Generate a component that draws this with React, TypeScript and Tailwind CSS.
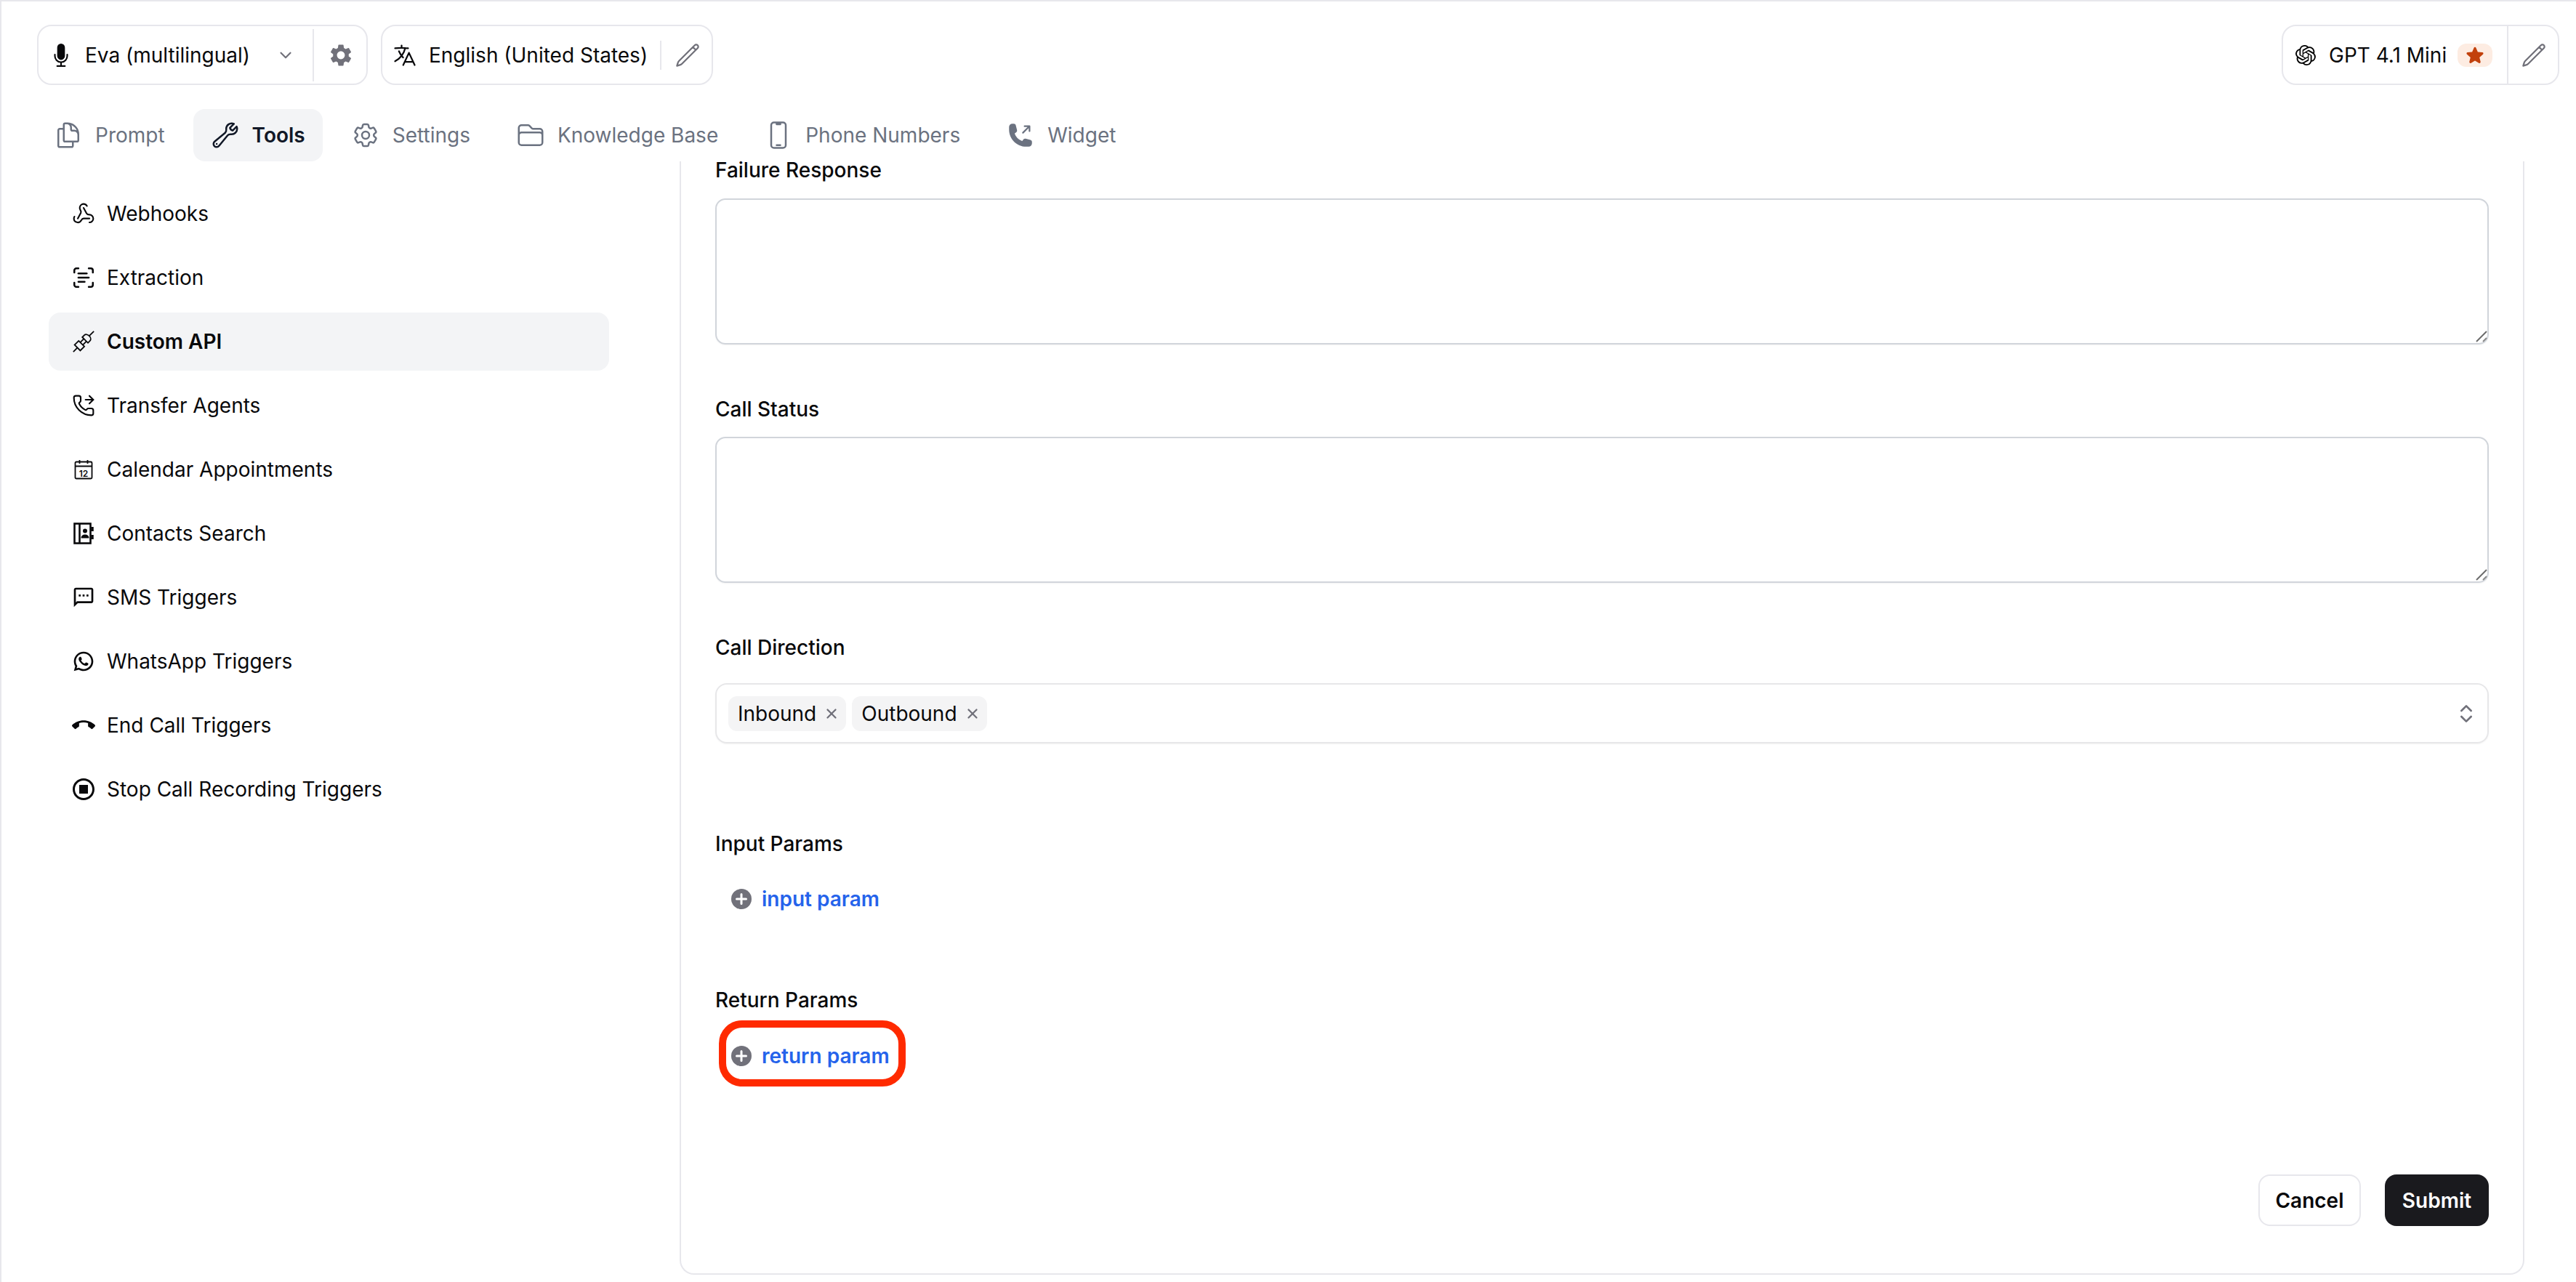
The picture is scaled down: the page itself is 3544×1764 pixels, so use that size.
import { ChevronDown, ChevronsUpDown, PhoneForwarded, ScanText, Webhook, X } from "lucide-react";
import type { ReactNode } from "react";
import {
  HiMicrophone,
  HiOutlineCog6Tooth,
  HiOutlineDevicePhoneMobile,
  HiOutlineDocumentDuplicate,
  HiOutlineFolder,
  HiOutlineLanguage,
  HiOutlinePencil,
  HiOutlineWrench,
  HiPhoneArrowUpRight,
  HiStar,
} from "react-icons/hi2";
import { MdCallEnd, MdOutlineSms, MdOutlineStopCircle, MdSettings } from "react-icons/md";
import { RiWhatsappLine } from "react-icons/ri";
import { SiOpenai } from "react-icons/si";

function CalendarIcon() {
  return (
    <svg viewBox="0 0 28 28" className="h-[28px] w-[28px]" fill="none" stroke="currentColor" strokeWidth="1.8">
      <rect x="2.5" y="3.5" width="23" height="23" rx="1.5" />
      <path d="M2.5 9.5h23M8.5 1v5M19.5 1v5" />
      <text x="14" y="23.5" textAnchor="middle" fontSize="12" fontWeight="600" fill="currentColor" stroke="none" fontFamily="Inter, sans-serif">
        12
      </text>
    </svg>
  );
}

function ContactsIcon() {
  return (
    <svg viewBox="0 0 30 32" className="h-[32px] w-[30px]" fill="none" stroke="currentColor" strokeWidth="2.6">
      <rect x="2.5" y="2.5" width="22" height="27" />
      <path d="M9.5 2.5v27" />
      <circle cx="17" cy="12.5" r="3" fill="currentColor" stroke="none" />
      <path d="M11.5 22.5c0-3.5 2.5-5 5.5-5s5.500 1.500 5.500 5z" fill="currentColor" stroke="none" />
      <path d="M27 7v6M27 18v6" strokeWidth="3.500" />
    </svg>
  );
}

function PlugIcon() {
  return (
    <svg viewBox="0 0 30 30" className="h-[30px] w-[30px]" fill="none" stroke="currentColor" strokeWidth="1.8">
      <g transform="translate(15 15) rotate(-45)">
        <path d="M-20 0h8M11 0h9" />
        <rect x="-12" y="-5.500" width="8" height="11" />
        <path d="M-4-2.500h7M-4 2.500h7" />
        <path d="M3-5.500h4a4 5.500 0 0 1 4 5.500 4 5.500 0 0 1-4 5.500h-4z" />
      </g>
    </svg>
  );
}

function PlusIcon() {
  return (
    <svg viewBox="0 0 28 28" className="h-[28px] w-[28px] shrink-0">
      <circle cx="14" cy="14" r="14" fill="#71717a" />
      <path d="M14 7.500v13M7.500 14h13" stroke="white" strokeWidth="3" strokeLinecap="round" />
    </svg>
  );
}

function ResizeGrip() {
  return (
    <svg viewBox="0 0 24 24" className="absolute right-0 bottom-0 h-6 w-6" fill="none">
      <path d="M7 20 21 6" stroke="#6b6b6b" strokeWidth="2" />
      <path d="M16 20l5-5" stroke="#8a8a8a" strokeWidth="2" />
    </svg>
  );
}

const tabs: { label: string; icon: ReactNode; active?: boolean }[] = [
  { label: "Prompt", icon: <HiOutlineDocumentDuplicate className="h-10 w-10" /> },
  { label: "Tools", icon: <HiOutlineWrench className="h-10 w-10" />, active: true },
  { label: "Settings", icon: <HiOutlineCog6Tooth className="h-10 w-10" /> },
  { label: "Knowledge Base", icon: <HiOutlineFolder className="h-10 w-10" /> },
  { label: "Phone Numbers", icon: <HiOutlineDevicePhoneMobile className="h-10 w-10" /> },
  { label: "Widget", icon: <HiPhoneArrowUpRight className="m-0.5 h-9 w-9" /> },
];

const sideItems: { label: string; icon: ReactNode; active?: boolean }[] = [
  { label: "Webhooks", icon: <Webhook className="h-8 w-8" strokeWidth={1.6} /> },
  { label: "Extraction", icon: <ScanText className="h-[34px] w-[34px]" strokeWidth={1.8} /> },
  { label: "Custom API", icon: <PlugIcon />, active: true },
  { label: "Transfer Agents", icon: <PhoneForwarded className="h-8 w-8" strokeWidth={1.6} /> },
  { label: "Calendar Appointments", icon: <CalendarIcon /> },
  { label: "Contacts Search", icon: <ContactsIcon /> },
  { label: "SMS Triggers", icon: <MdOutlineSms className="h-8 w-8" /> },
  { label: "WhatsApp Triggers", icon: <RiWhatsappLine className="h-8 w-8" /> },
  { label: "End Call Triggers", icon: <MdCallEnd className="h-8 w-8" /> },
  { label: "Stop Call Recording Triggers", icon: <MdOutlineStopCircle className="h-9 w-9" /> },
];

function Label({ children }: { children: ReactNode }) {
  return <label className="block translate-y-px text-[28px] leading-[40px] font-medium text-[#09090b]">{children}</label>;
}

function ParamButton({ label }: { label: string }) {
  return (
    <button type="button" className="flex h-14 items-center gap-[14px] pl-[22px] text-[28px] font-semibold text-[#2563eb]">
      <PlusIcon />
      {label}
    </button>
  );
}

function Chip({ label }: { label: string }) {
  return (
    <span className="flex h-12 items-center gap-[10px] rounded-xl bg-[#f4f4f5] pr-[9px] pl-[13px] text-[28px] text-[#09090b]">
      {label}
      <X className="h-[22px] w-[22px] text-[#71717a]" strokeWidth={2.5} />
    </span>
  );
}

function TextBox() {
  return (
    <div className="relative h-[201px] w-full">
      <textarea className="block h-full w-full resize-none rounded-[14px] border-2 border-[#d1d5db] shadow-xs" />
      <ResizeGrip />
    </div>
  );
}

export default function App() {
  return (
    <div className="flex h-[1764px] w-[3544px] flex-col overflow-hidden border-t-2 border-l-2 border-[#e7e7ec] bg-white font-[Inter,sans-serif] text-[28px] text-[#09090b]">
      <header className="mt-8 flex h-[83px] items-start justify-between pr-[23px] pl-[49px]">
        <div className="flex gap-[18px]">
          <div className="flex h-[83px] w-[455px] items-center rounded-[20px] border-2 border-[#e7e7ec] pl-[14px]">
            <HiMicrophone className="h-[34px] w-[34px] shrink-0" />
            <span className="ml-4 whitespace-nowrap">Eva (multilingual)</span>
            <ChevronDown className="ml-9 h-[26px] w-[26px] shrink-0 text-[#71717a]" strokeWidth={2} />
            <div className="ml-6 h-[72px] w-0.5 shrink-0 bg-[#e7e7ec]" />
            <MdSettings className="ml-[19px] h-9 w-9 shrink-0 text-[#71717a]" />
          </div>
          <div className="flex h-[83px] w-[457px] items-center rounded-[20px] border-2 border-[#e7e7ec] pl-[13px]">
            <HiOutlineLanguage className="h-9 w-9 shrink-0" />
            <span className="ml-[15px] whitespace-nowrap">English (United States)</span>
            <div className="ml-[17px] h-10 w-0.5 shrink-0 bg-[#e7e7ec]" />
            <HiOutlinePencil className="ml-[18px] h-9 w-9 shrink-0 text-[#71717a]" />
          </div>
        </div>
        <div className="flex h-[83px] w-[382px] items-center rounded-[20px] border-2 border-[#e7e7ec] pl-[17px]">
          <SiOpenai className="h-7 w-7 shrink-0 text-black" />
          <span className="ml-[18px] whitespace-nowrap">GPT 4.1 Mini</span>
          <span className="ml-[15px] flex h-8 w-12 shrink-0 items-center justify-center rounded-xl bg-[#fdece2]">
            <HiStar className="h-7 w-7 text-[#c2410c]" />
          </span>
          <div className="ml-5 h-full w-0.5 shrink-0 bg-[#e7e7ec]" />
          <HiOutlinePencil className="ml-[17px] h-9 w-9 shrink-0 text-[#71717a]" />
        </div>
      </header>

      <nav className="mt-[33px] flex h-[72px] gap-[15px] pl-[48px]">
        {tabs.map((tab) => (
          <div
            key={tab.label}
            className={`flex h-[72px] items-center gap-[17px] rounded-2xl px-6 ${
              tab.active ? "bg-[#f3f4f6] font-semibold text-[#111827]" : "text-[#6b7280]"
            }`}
          >
            {tab.icon}
            <span className="whitespace-nowrap">{tab.label}</span>
          </div>
        ))}
      </nav>

      <div className="flex min-h-0 flex-1">
        <aside className="flex w-[933px] shrink-0 flex-col gap-2 pt-[32px] pl-[65px]">
          {sideItems.map((item) => (
            <div
              key={item.label}
              className={`flex h-20 w-[771px] items-center rounded-2xl ${item.active ? "bg-[#f3f4f6] font-semibold" : ""}`}
            >
              <span className="flex w-[80px] shrink-0 justify-center pl-[15px]">{item.icon}</span>
              {item.label}
            </div>
          ))}
        </aside>

        <main className="mb-[10px] w-[2538px] rounded-b-[20px] border-x-2 border-b-2 border-[#e7e7ec] pr-[47px] pl-[47px]">
          <label className="block text-[28px] leading-[24px] font-medium text-[#09090b]">Failure Response</label>
          <div className="mt-[27px]">
            <TextBox />
          </div>
          <div className="mt-[68px]">
            <Label>Call Status</Label>
          </div>
          <div className="mt-[19px]">
            <TextBox />
          </div>
          <div className="mt-[68px]">
            <Label>Call Direction</Label>
          </div>
          <div className="mt-[30px] flex h-[83px] items-center gap-2 rounded-2xl border-2 border-[#e7e7e9] pr-[13px] pl-4 shadow-xs">
            <Chip label="Inbound" />
            <Chip label="Outbound" />
            <ChevronsUpDown className="ml-auto h-8 w-8 text-[#71717a]" strokeWidth={2} />
          </div>
          <div className="mt-[117px]">
            <Label>Input Params</Label>
          </div>
          <div className="mt-[29px]">
            <ParamButton label="input param" />
          </div>
          <div className="mt-[90px]">
            <Label>Return Params</Label>
          </div>
          <div className="relative mt-[30px]">
            <ParamButton label="return param" />
            <div className="absolute top-[-21px] left-[5px] h-[91px] w-[257px] rounded-[32px] border-[10px] border-[#ff2a00]" />
          </div>
          <div className="mt-[135px] flex justify-end gap-[33px]">
            <button type="button" className="h-[71px] w-[141px] rounded-2xl border-2 border-[#e7e7ec] bg-white font-semibold">
              Cancel
            </button>
            <button type="button" className="h-[71px] w-[143px] rounded-2xl bg-[#1a1a1e] font-semibold text-white">
              Submit
            </button>
          </div>
        </main>
      </div>
    </div>
  );
}
